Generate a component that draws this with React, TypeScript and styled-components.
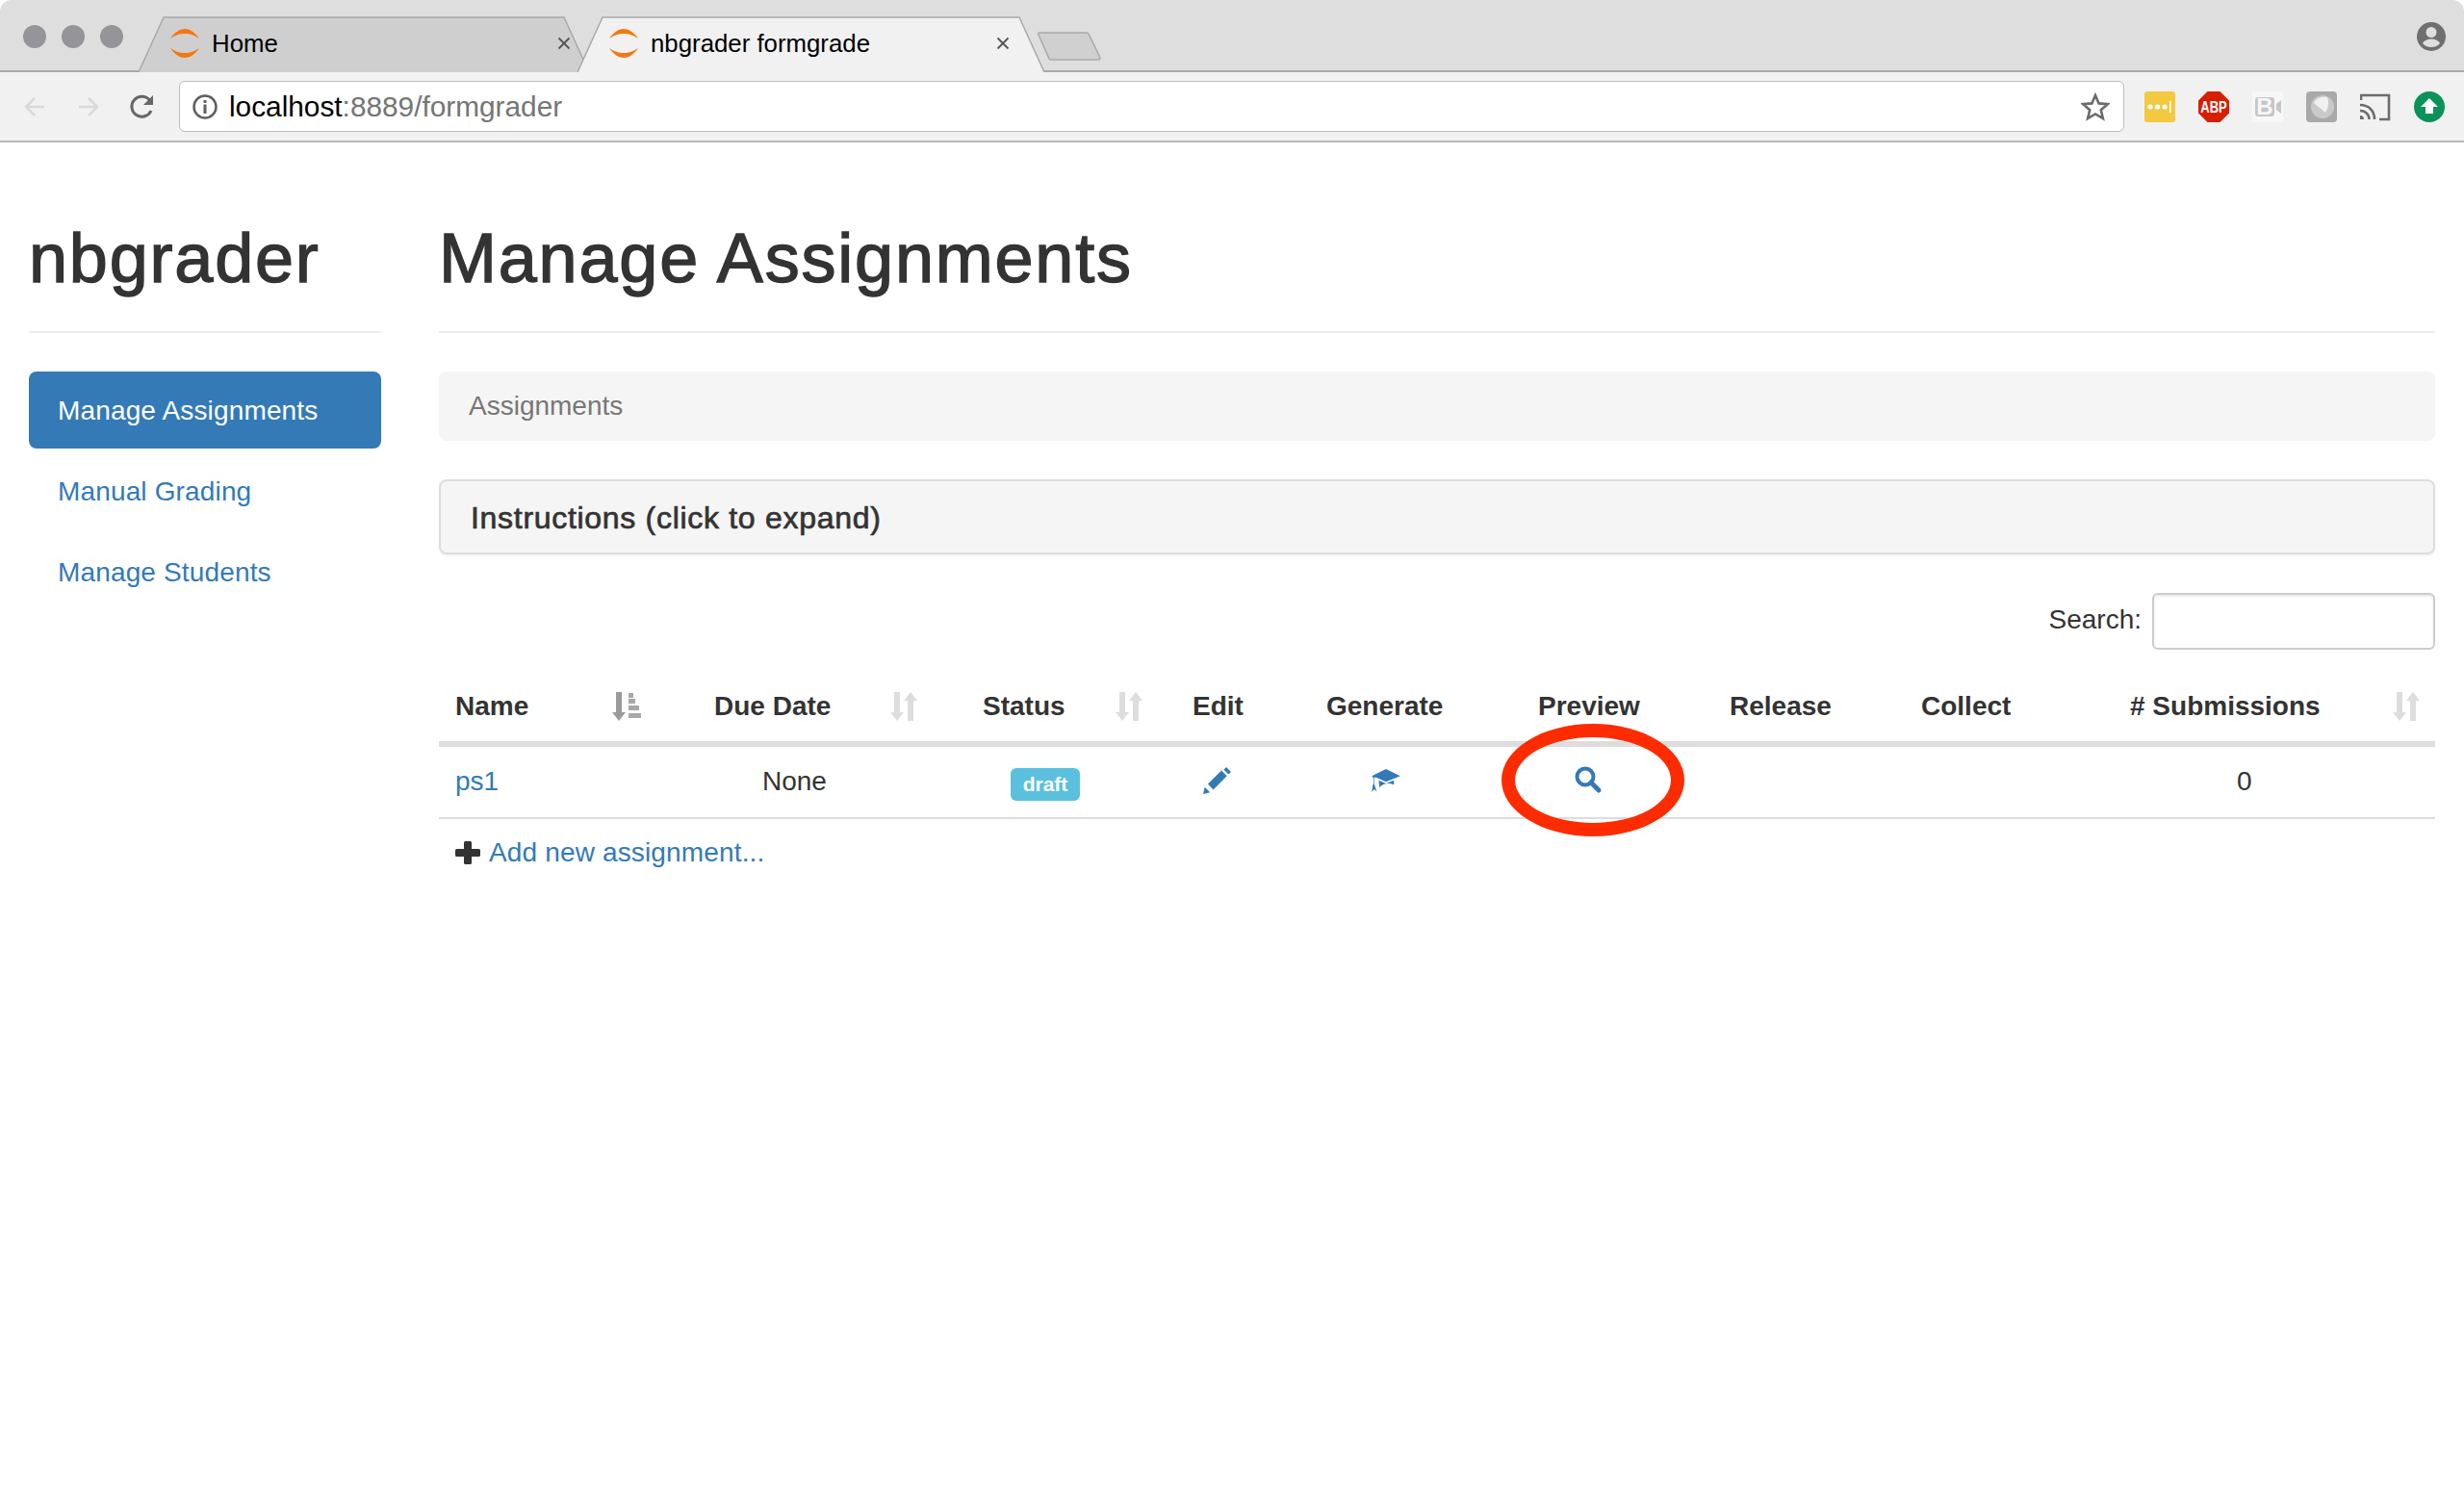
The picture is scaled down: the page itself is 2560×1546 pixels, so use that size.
import styled, {createGlobalStyle} from "styled-components";

const GlobalStyle = createGlobalStyle`
  html, body {
    margin: 0;
    padding: 0;
    background: #ffffff;
  }
  body {
    min-height: 1546px;
    font-family: "Liberation Sans", Arial, sans-serif;
    font-size: 28px;
    color: #333333;
  }
  * {
    box-sizing: border-box;
  }
`

const columns = [269, 279, 218, 139, 220, 199, 199, 217, 334];

const Favicon = () => (
    <FaviconSvg viewBox="0 0 30 30">
        <path d="M0 10C5 3 10 0 15 0s10 3 15 10c-6-4-10-5-15-5S6 6 0 10z" fill="#f5780e"/>
        <path d="M0 20c5 7 10 10 15 10s10-3 15-10c-6 4-10 5-15 5S6 24 0 20z" fill="#f5780e"/>
    </FaviconSvg>
);

const CloseMark = () => (
    <CloseSvg viewBox="0 0 14 14">
        <path d="M1.5 1.5l11 11M12.5 1.5l-11 11" stroke="#555" strokeWidth="1.8" fill="none"/>
    </CloseSvg>
);

const SortBoth = () => (
    <SortSvg $w={28} viewBox="0 0 28 30">
        <path d="M4 0h6v21h4l-7 9-7-9h4zM21 0l7 9h-4v21h-6V9h-4z" fill="#dddddd"/>
    </SortSvg>
);

const SortAmount = () => (
    <SortSvg $w={30} viewBox="0 0 30 30">
        <path d="M4 0h6v21h4l-7 9-7-9h4z" fill="#9b9b9b"/>
        <path d="M17 1h5v5h-5zM17 7h7v5h-7zM17 14h11v5H17zM17 22h13v5H17z" fill="#a8a8a8"/>
    </SortSvg>
);

const PencilIcon = () => (
    <IconSvg viewBox="0 0 88 85" width="29" height="28">
        <path d="M0 85L5 63 22 80zM15 53L58 11 75 28 32 71zM65 8L73 0 88 15 80 23z" fill="#337ab7"/>
    </IconSvg>
);

const CapIcon = () => (
    <IconSvg viewBox="0 0 90 73" width="30" height="24">
        <path d="M45 0L90 22 45 40 12 26 8 28V50L6 50V28L0 22z" fill="#337ab7"/>
        <path d="M22 36L45 46 70 36V50C50 42 38 46 24 58z" fill="#337ab7"/>
        <path d="M4 48L8 48 16 72 8 64 0 73z" fill="#337ab7"/>
    </IconSvg>
);

const SearchIcon = () => (
    <IconSvg viewBox="0 0 29 30" width="29" height="30">
        <circle cx="11" cy="11" r="8.5" fill="none" stroke="#337ab7" strokeWidth="4"/>
        <path d="M17 17l8 8" stroke="#337ab7" strokeWidth="5" strokeLinecap="round" fill="none"/>
    </IconSvg>
);

const App = () => {
    return (
        <Wrapper>
            <GlobalStyle/>
            <TabStrip>
                <Lights>
                    <Light/>
                    <Light/>
                    <Light/>
                </Lights>
                <Tabs>
                    <Tab $width={468}>
                        <TabShape viewBox="0 0 468 58" preserveAspectRatio="none">
                            <path d="M0 58L26 1H442L468 58z" fill="#cfcfcf"/>
                            <path d="M0 58L26 1H442L468 58" fill="none" stroke="#a9a9a9" strokeWidth="1.5"/>
                        </TabShape>
                        <Favicon/>
                        <TabTitle>Home</TabTitle>
                        <CloseMark/>
                    </Tab>
                    <Tab $width={485} $active>
                        <TabShape viewBox="0 0 485 58" preserveAspectRatio="none">
                            <path d="M0 58L26 1H459L485 58z" fill="#f1f1f1"/>
                            <path d="M0 58L26 1H459L485 58" fill="none" stroke="#a9a9a9" strokeWidth="1.5"/>
                        </TabShape>
                        <Favicon/>
                        <TabTitle>nbgrader formgrade</TabTitle>
                        <CloseMark/>
                    </Tab>
                    <NewTab viewBox="0 0 67 30">
                        <path d="M2 3Q1 1 3 1H52Q54 1 54.500 3L66 27Q66 29 64 29H15Q13 29 12.500 27z" fill="#d0d0d0" stroke="#a9a9a9" strokeWidth="1.500"/>
                    </NewTab>
                </Tabs>
                <Profile viewBox="0 0 30 30">
                    <circle cx="15" cy="15" r="15" fill="#6f6f6f"/>
                    <circle cx="15" cy="10.500" r="5.500" fill="#dedede"/>
                    <path d="M6 22c1.500-3 5-4.500 9-4.500s7.500 1.500 9 4.500c-2 2.500-5 4-9 4s-7-1.500-9-4z" fill="#dedede"/>
                </Profile>
            </TabStrip>
            <Toolbar>
                <NavButton>
                    <svg width="24" height="24" viewBox="0 0 24 24">
                        <path d="M22 12H4M12 3l-9 9 9 9" fill="none" stroke="#d9d9d9" strokeWidth="2.500"/>
                    </svg>
                </NavButton>
                <NavButton>
                    <svg width="24" height="24" viewBox="0 0 24 24">
                        <path d="M2 12h18M12 3l9 9-9 9" fill="none" stroke="#d9d9d9" strokeWidth="2.500"/>
                    </svg>
                </NavButton>
                <NavButton>
                    <svg width="28" height="28" viewBox="0 0 28 28">
                        <path d="M23 18a10.500 10.500 0 1 1-1.500-11" fill="none" stroke="#666" strokeWidth="3"/>
                        <path d="M25 2v10H15z" fill="#666"/>
                    </svg>
                </NavButton>
                <AddressBar>
                    <svg width="26" height="26" viewBox="0 0 26 26">
                        <circle cx="13" cy="13" r="11.500" fill="none" stroke="#5f5f5f" strokeWidth="2.500"/>
                        <path d="M11.500 10.500h3V20h-3zM11.500 6h3v3h-3z" fill="#5f5f5f"/>
                    </svg>
                    <Url>localhost<UrlRest>:8889/formgrader</UrlRest></Url>
                    <StarIcon viewBox="0 0 30 30">
                        <path d="M15 3l3.600 8.400 9.100.8-6.900 6 2.100 8.900L15 22.400 7.100 27.100l2.100-8.900-6.900-6 9.100-.8z" fill="none" stroke="#6b6b6b" strokeWidth="2.600"/>
                    </StarIcon>
                </AddressBar>
                <Extensions>
                    <svg width="32" height="32" viewBox="0 0 32 32">
                        <rect width="32" height="32" rx="3" fill="#f3c93f"/>
                        <circle cx="6" cy="16" r="2.600" fill="#fff"/>
                        <circle cx="13.500" cy="16" r="2.600" fill="#fff"/>
                        <circle cx="21" cy="16" r="2.600" fill="#fff"/>
                        <rect x="26" y="10" width="1.600" height="12" fill="#fff"/>
                    </svg>
                    <svg width="32" height="32" viewBox="0 0 32 32">
                        <path d="M9.500 0h13L32 9.500v13L22.500 32h-13L0 22.500v-13z" fill="#d71f00"/>
                        <AbpText transform="translate(16 22) scale(1 1.300)" textAnchor="middle">ABP</AbpText>
                    </svg>
                    <svg width="32" height="32" viewBox="0 0 32 32">
                        <rect width="32" height="32" fill="#f7f7f7"/>
                        <rect x="3" y="6" width="20" height="20" rx="3" fill="#c6c6c6"/>
                        <BText x="13" y="24" textAnchor="middle">B</BText>
                        <path d="M25 13l5-4v14l-5-4z" fill="#c6c6c6"/>
                    </svg>
                    <svg width="32" height="32" viewBox="0 0 32 32">
                        <rect width="32" height="32" rx="4" fill="#a9a9a9"/>
                        <circle cx="17" cy="16" r="12" fill="#c9c9c9"/>
                        <path d="M8 12c2-5 8-7 14-6 2 6 1 11-2 16z" fill="#f1f1f1"/>
                    </svg>
                    <svg width="32" height="32" viewBox="0 0 32 32">
                        <path d="M1 9V4h29v25H20" fill="none" stroke="#6c6c6c" strokeWidth="2.600"/>
                        <path d="M0 14c9 0 15 6 15 15M0 20c5.500 0 9.500 4 9.500 9" fill="none" stroke="#6c6c6c" strokeWidth="2.600"/>
                        <path d="M0 25c2.500 0 4 1.500 4 4H0z" fill="#6c6c6c"/>
                    </svg>
                    <svg width="32" height="32" viewBox="0 0 32 32">
                        <circle cx="16" cy="16" r="16" fill="#0a9359"/>
                        <path d="M16 7l9 9h-5v7h-8v-7H7z" fill="#fff"/>
                    </svg>
                </Extensions>
            </Toolbar>
            <Page>
                <Sidebar>
                    <PageHeader>
                        <Title>nbgrader</Title>
                    </PageHeader>
                    <NavList>
                        <NavItem $active>Manage Assignments</NavItem>
                        <NavItem>Manual Grading</NavItem>
                        <NavItem>Manage Students</NavItem>
                    </NavList>
                </Sidebar>
                <Main>
                    <PageHeader>
                        <Title>Manage Assignments</Title>
                    </PageHeader>
                    <Breadcrumb>Assignments</Breadcrumb>
                    <Panel>Instructions (click to expand)</Panel>
                    <SearchRow>
                        <SearchLabel>Search:</SearchLabel>
                        <SearchInput/>
                    </SearchRow>
                    <Table>
                        <colgroup>
                            {columns.map((w, i) => <Col key={i} $w={w}/>)}
                        </colgroup>
                        <thead>
                            <tr>
                                <Th><HeadInner>Name<SortSlot $gap={87}><SortAmount/></SortSlot></HeadInner></Th>
                                <Th><HeadInner>Due Date<SortSlot $gap={62}><SortBoth/></SortSlot></HeadInner></Th>
                                <Th><HeadInner>Status<SortSlot $gap={52}><SortBoth/></SortSlot></HeadInner></Th>
                                <Th>Edit</Th>
                                <Th>Generate</Th>
                                <Th>Preview</Th>
                                <Th>Release</Th>
                                <Th>Collect</Th>
                                <Th><HeadInner># Submissions<SortSlot $gap={75}><SortBoth/></SortSlot></HeadInner></Th>
                            </tr>
                        </thead>
                        <tbody>
                            <tr>
                                <Td><Link>ps1</Link></Td>
                                <Td $indent={67}>None</Td>
                                <Td $indent={46}><Badge>draft</Badge></Td>
                                <Td $indent={28}><PencilIcon/></Td>
                                <Td $indent={64}><CapIcon/></Td>
                                <PreviewCell $indent={55}>
                                    <SearchIcon/>
                                    <Callout/>
                                </PreviewCell>
                                <Td/>
                                <Td/>
                                <Td $indent={128}>0</Td>
                            </tr>
                        </tbody>
                    </Table>
                    <AddRow>
                        <PlusMark viewBox="0 0 26 24">
                            <path d="M9 1.500Q9 0 10.500 0h5Q17 0 17 1.500V8h7.500Q26 8 26 9.500v5Q26 16 24.500 16H17v6.500Q17 24 15.500 24h-5Q9 24 9 22.500V16H1.500Q0 16 0 14.500v-5Q0 8 1.500 8H9z" fill="#333"/>
                        </PlusMark>
                        <AddLink>Add new assignment...</AddLink>
                    </AddRow>
                </Main>
            </Page>
        </Wrapper>
    );
};

const Wrapper = styled.div`
  width: 2560px;
  min-height: 1546px;
  background-color: #ffffff;
`
const TabStrip = styled.div`
  display: flex;
  align-items: flex-start;
  height: 75px;
  padding-left: 24px;
  padding-right: 19px;
  background-color: #dedede;
  border-bottom: 2px solid #a9a9a9;
  border-radius: 12px 12px 0 0;
`
const Lights = styled.div`
  display: flex;
  gap: 16px;
  margin-top: 26px;
`
const Light = styled.span`
  width: 24px;
  height: 24px;
  border-radius: 50%;
  background-color: #949499;
`
const Tabs = styled.div`
  display: flex;
  margin-left: 16px;
  margin-top: 17px;
`
const Tab = styled.div<{$width: number; $active?: boolean}>`
  position: relative;
  display: flex;
  align-items: center;
  width: ${(props) => props.$width}px;
  height: 58px;
  padding: 0 ${(props) => props.$active ? 33 : 16}px 2px 33px;
  margin-left: ${(props) => props.$active ? -12 : 0}px;
  z-index: ${(props) => props.$active ? 2 : 1};
`
const TabShape = styled.svg`
  position: absolute;
  left: 0;
  top: 0;
  width: 100%;
  height: 100%;
`
const FaviconSvg = styled.svg`
  position: relative;
  width: 30px;
  height: 30px;
  flex-shrink: 0;
`
const TabTitle = styled.span`
  position: relative;
  margin-left: 13px;
  font-size: 25.8px;
  color: #000000;
`
const CloseSvg = styled.svg`
  position: relative;
  margin-left: auto;
  width: 14px;
  height: 14px;
  margin-right: 3px;
`
const NewTab = styled.svg`
  width: 67px;
  height: 30px;
  margin-top: 16px;
  margin-left: -8px;
`
const Profile = styled.svg`
  width: 30px;
  height: 30px;
  margin-left: auto;
  margin-top: 23px;
`
const Toolbar = styled.div`
  display: flex;
  align-items: center;
  height: 73px;
  padding-left: 8px;
  padding-right: 20px;
  background-color: #f1f1f1;
  border-bottom: 2px solid #b9b9b9;
`
const NavButton = styled.div`
  display: flex;
  align-items: center;
  justify-content: center;
  width: 56px;
`
const AddressBar = styled.div`
  display: flex;
  align-items: center;
  flex: 1;
  height: 53px;
  margin-left: 10px;
  padding-left: 13px;
  padding-right: 14px;
  background-color: #ffffff;
  border: 1.5px solid #bdbdbd;
  border-radius: 6px;
`
const Url = styled.span`
  margin-left: 12px;
  font-size: 29.8px;
  color: #000000;
`
const UrlRest = styled.span`
  color: #757575;
`
const StarIcon = styled.svg`
  width: 30px;
  height: 30px;
  margin-left: auto;
`
const Extensions = styled.div`
  display: flex;
  align-items: center;
  gap: 24px;
  margin-left: 21px;
`
const AbpText = styled.text`
  font-family: "Liberation Sans", sans-serif;
  font-weight: 700;
  font-size: 13px;
  fill: #ffffff;
`
const BText = styled.text`
  font-family: "Liberation Sans", sans-serif;
  font-weight: 700;
  font-size: 24px;
  fill: #f7f7f7;
`
const Page = styled.div`
  display: flex;
  gap: 60px;
  padding: 81px 30px 0 30px;
`
const Sidebar = styled.div`
  width: 366px;
  flex-shrink: 0;
`
const Main = styled.div`
  flex: 1;
  min-width: 0;
`
const PageHeader = styled.div`
  padding-bottom: 36px;
  margin-bottom: 40px;
  border-bottom: 2px solid #eeeeee;
`
const Title = styled.h1`
  margin: 0;
  font-size: 72px;
  font-weight: 500;
  line-height: 79px;
  letter-spacing: 1.8px;
  -webkit-text-stroke: 1.4px #333333;
  color: #333333;
`
const NavList = styled.div`
  display: flex;
  flex-direction: column;
  gap: 4px;
`
const NavItem = styled.div<{$active?: boolean}>`
  height: 80px;
  padding: 0 30px;
  line-height: 82px;
  letter-spacing: 0.15px;
  border-radius: 8px;
  color: ${(props) => props.$active ? '#ffffff' : '#337ab7'};
  background-color: ${(props) => props.$active ? '#337ab7' : 'transparent'};
`
const Breadcrumb = styled.div`
  height: 72px;
  padding-left: 31px;
  line-height: 72px;
  background-color: #f5f5f5;
  border-radius: 8px;
  color: #777777;
`
const Panel = styled.div`
  height: 78px;
  margin-top: 40px;
  padding-left: 31px;
  line-height: 76px;
  font-size: 32px;
  letter-spacing: 0.7px;
  -webkit-text-stroke: 0.7px #333333;
  background-color: #f5f5f5;
  border: 2px solid #dddddd;
  border-radius: 8px;
  box-shadow: 0 2px 2px rgba(0, 0, 0, 0.05);
`
const SearchRow = styled.div`
  display: flex;
  align-items: center;
  justify-content: flex-end;
  gap: 11px;
  margin-top: 40px;
  margin-bottom: 23px;
`
const SearchLabel = styled.label`
  margin-bottom: 3px;
`
const SearchInput = styled.input`
  width: 294px;
  height: 59px;
  background: #ffffff;
  border: 2px solid #cccccc;
  border-radius: 6px;
  box-shadow: inset 0 2px 2px rgba(0, 0, 0, 0.075);
  outline: none;
`
const Table = styled.table`
  width: 100%;
  table-layout: fixed;
  border-collapse: separate;
  border-spacing: 0;
`
const Col = styled.col<{$w: number}>`
  width: ${(props) => props.$w}px;
`
const Th = styled.th`
  height: 78px;
  padding: 0 0 0 17px;
  text-align: left;
  font-weight: 700;
  white-space: nowrap;
  border-bottom: 6px solid #dddddd;
`
const HeadInner = styled.div`
  display: flex;
  align-items: center;
`
const SortSlot = styled.span<{$gap: number}>`
  display: inline-flex;
  margin-left: ${(props) => props.$gap}px;
`
const SortSvg = styled.svg<{$w: number}>`
  width: ${(props) => props.$w}px;
  height: 30px;
  flex-shrink: 0;
`
const Td = styled.td<{$indent?: number}>`
  height: 75px;
  padding: 0 0 2px ${(props) => props.$indent ?? 17}px;
  border-bottom: 2px solid #dddddd;
  white-space: nowrap;
`
const PreviewCell = styled(Td)`
  position: relative;
`
const IconSvg = styled.svg`
  display: block;
  margin-top: -2px;
`
const Link = styled.span`
  color: #337ab7;
`
const AddLink = styled(Link)`
  letter-spacing: 0.15px;
`
const Badge = styled.span`
  display: block;
  width: 72px;
  height: 34px;
  margin-top: 6px;
  line-height: 34px;
  text-align: center;
  font-size: 21px;
  font-weight: 700;
  color: #ffffff;
  background-color: #5bc0de;
  border-radius: 6px;
`
const Callout = styled.div`
  position: absolute;
  left: -21px;
  top: -24px;
  width: 190px;
  height: 117px;
  border: 14px solid #fd2c00;
  border-radius: 50%;
`
const AddRow = styled.div`
  display: flex;
  align-items: center;
  gap: 9px;
  margin-top: 15px;
  padding-left: 17px;
  height: 40px;
`
const PlusMark = styled.svg`
  width: 26px;
  height: 24px;
`
export default App;
